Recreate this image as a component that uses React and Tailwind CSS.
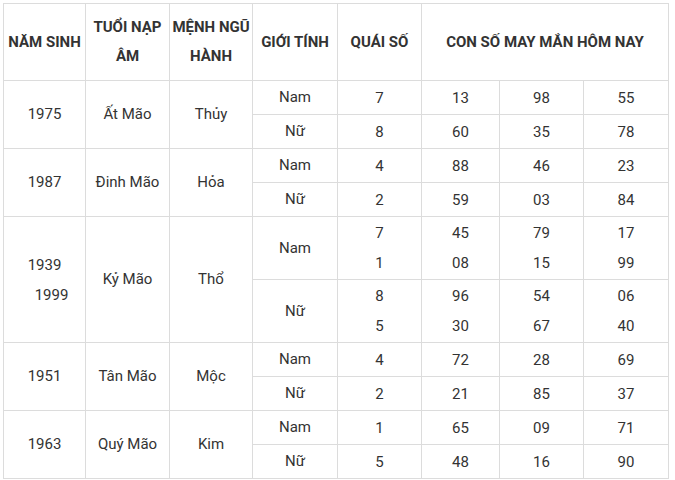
import React from 'react';

const groups = [
  {
    year: ['1975'],
    napAm: 'Ất Mão',
    menh: 'Thủy',
    rows: [
      { gender: 'Nam', quai: ['7'], nums: [['13'], ['98'], ['55']] },
      { gender: 'Nữ', quai: ['8'], nums: [['60'], ['35'], ['78']] },
    ],
  },
  {
    year: ['1987'],
    napAm: 'Đinh Mão',
    menh: 'Hỏa',
    rows: [
      { gender: 'Nam', quai: ['4'], nums: [['88'], ['46'], ['23']] },
      { gender: 'Nữ', quai: ['2'], nums: [['59'], ['03'], ['84']] },
    ],
  },
  {
    year: ['1939', '1999'],
    napAm: 'Kỷ Mão',
    menh: 'Thổ',
    tall: true,
    rows: [
      { gender: 'Nam', quai: ['7', '1'], nums: [['45', '08'], ['79', '15'], ['17', '99']] },
      { gender: 'Nữ', quai: ['8', '5'], nums: [['96', '30'], ['54', '67'], ['06', '40']] },
    ],
  },
  {
    year: ['1951'],
    napAm: 'Tân Mão',
    menh: 'Mộc',
    rows: [
      { gender: 'Nam', quai: ['4'], nums: [['72'], ['28'], ['69']] },
      { gender: 'Nữ', quai: ['2'], nums: [['21'], ['85'], ['37']] },
    ],
  },
  {
    year: ['1963'],
    napAm: 'Quý Mão',
    menh: 'Kim',
    rows: [
      { gender: 'Nam', quai: ['1'], nums: [['65'], ['09'], ['71']] },
      { gender: 'Nữ', quai: ['5'], nums: [['48'], ['16'], ['90']] },
    ],
  },
];

const td = 'border border-[#dcdcdc] text-center align-middle p-0';
const th = 'border border-[#dcdcdc] text-center align-middle p-0 font-bold text-[#333] leading-[29px]';

const Lines = ({ items }) => (
  <div className="flex flex-col items-center leading-[30px]">
    {items.map((t, i) => (
      <span key={i}>{t}</span>
    ))}
  </div>
);

const App = () => {
  return (
    <div
      className="w-[675px] h-[480px] bg-white pt-[3px] pl-[3px]"
      style={{ fontFamily: 'Roboto, "Noto Sans", sans-serif' }}
    >
      <table className="table-fixed border-collapse text-[15px] text-[#333] w-[665px]">
        <colgroup>
          <col className="w-[82px]" />
          <col className="w-[84px]" />
          <col className="w-[83px]" />
          <col className="w-[85px]" />
          <col className="w-[84px]" />
          <col className="w-[78px]" />
          <col className="w-[84px]" />
          <col className="w-[85px]" />
        </colgroup>
        <thead>
          <tr className="h-[77px]">
            <th className={th}>NĂM SINH</th>
            <th className={th}>TUỔI NẠP<br />ÂM</th>
            <th className={th}>MỆNH NGŨ<br />HÀNH</th>
            <th className={th}>GIỚI TÍNH</th>
            <th className={th}>QUÁI SỐ</th>
            <th className={th} colSpan={3}>CON SỐ MAY MẮN HÔM NAY</th>
          </tr>
        </thead>
        <tbody>
          {groups.map((g) =>
            g.rows.map((r, ri) => (
              <tr key={g.napAm + ri} className={g.tall ? 'h-[63px]' : 'h-[34px]'}>
                {ri === 0 && (
                  <>
                    <td className={td} rowSpan={2}>
                      {g.year.length > 1 ? (
                        <div className="flex flex-col items-center leading-[30px]">
                          <span>{g.year[0]}</span>
                          <span className="ml-[14px]">{g.year[1]}</span>
                        </div>
                      ) : (
                        g.year[0]
                      )}
                    </td>
                    <td className={td} rowSpan={2}>{g.napAm}</td>
                    <td className={td} rowSpan={2}>{g.menh}</td>
                  </>
                )}
                <td className={td}>{r.gender}</td>
                <td className={td}><Lines items={r.quai} /></td>
                {r.nums.map((n, ni) => (
                  <td key={ni} className={td}><Lines items={n} /></td>
                ))}
              </tr>
            ))
          )}
        </tbody>
      </table>
    </div>
  );
};

export default App;
